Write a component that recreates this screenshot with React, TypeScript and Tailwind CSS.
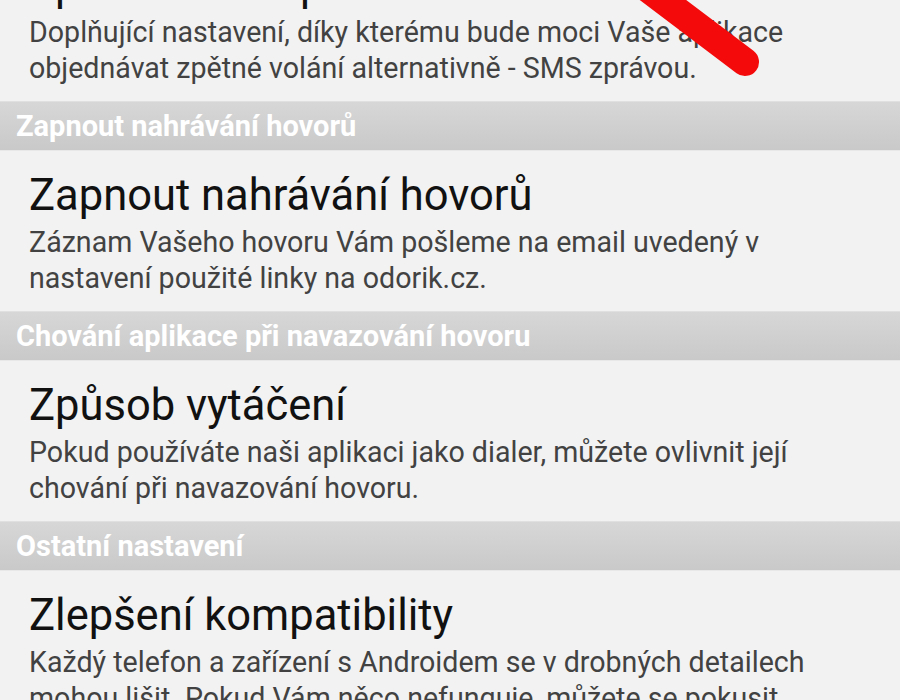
import React from "react";

const font = { fontFamily: 'Roboto, "Noto Sans", sans-serif' };

function Header({ text }: { text: string }) {
  return (
    <div className="h-[50px] flex items-center pl-[16px] pt-[1px] border-t border-[#e0e0e0] border-b border-b-[#e8e8e8] bg-gradient-to-b from-[#d7d7d7] to-[#c9c9c9]">
      <span className="text-white font-bold text-[29px] leading-none">{text}</span>
    </div>
  );
}

function Item({ title, lines }: { title: string; lines: string[] }) {
  return (
    <div className="h-[160px] pl-[29px] pt-[20px] bg-[#f2f2f2]">
      <div className="text-[43.5px] leading-[50px] text-[#111]">{title}</div>
      <div className="mt-[4px] text-[28.6px] leading-[35.5px] text-[#424242]">
        {lines.map((l, i) => (
          <div key={i} className="whitespace-nowrap">{l}</div>
        ))}
      </div>
    </div>
  );
}

export default function App() {
  return (
    <div className="relative w-[900px] h-[700px] overflow-hidden bg-[#f2f2f2]" style={font}>
      <div className="-mt-[59px]">
        <Item
          title="Zpětné volání přes SMS"
          lines={[
            "Doplňující nastavení, díky kterému bude moci Vaše aplikace",
            "objednávat zpětné volání alternativně - SMS zprávou.",
          ]}
        />
        <Header text="Zapnout nahrávání hovorů" />
        <Item
          title="Zapnout nahrávání hovorů"
          lines={[
            "Záznam Vašeho hovoru Vám pošleme na email uvedený v",
            "nastavení použité linky na odorik.cz.",
          ]}
        />
        <Header text="Chování aplikace při navazování hovoru" />
        <Item
          title="Způsob vytáčení"
          lines={[
            "Pokud používáte naši aplikaci jako dialer, můžete ovlivnit její",
            "chování při navazování hovoru.",
          ]}
        />
        <Header text="Ostatní nastavení" />
        <Item
          title="Zlepšení kompatibility"
          lines={[
            "Každý telefon a zařízení s Androidem se v drobných detailech",
            "mohou lišit. Pokud Vám něco nefunguje, můžete se pokusit",
          ]}
        />
      </div>
      <svg className="absolute left-0 top-0 pointer-events-none" width="900" height="120" viewBox="0 0 900 120">
        <line x1="610" y1="-40" x2="745" y2="62" stroke="#f40a0a" strokeWidth="28" strokeLinecap="round" />
      </svg>
    </div>
  );
}
